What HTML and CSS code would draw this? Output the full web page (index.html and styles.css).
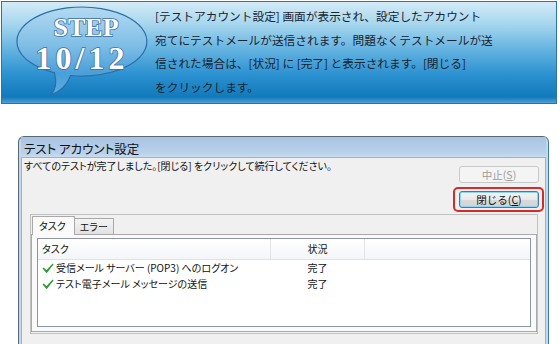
FILE: index.html
```html
<!DOCTYPE html>
<html lang="ja">
  <head>
    <meta charset="UTF-8" />
    <title>STEP 10/12 テスト アカウント設定</title>
    <link rel="stylesheet" href="styles.css">
  </head>
  <body>
    <div class="banner">
      <svg class="bubble" width="150" height="101" viewBox="0 0 150 101">
        <defs>
          <linearGradient id="bubble-fill" x1="0" y1="0" x2="0" y2="1">
            <stop offset="0" stop-color="#b4daf1" />
            <stop offset="0.45" stop-color="#7dbde6" />
            <stop offset="0.75" stop-color="#4a9fd9" />
            <stop offset="1" stop-color="#5aaee0" />
          </linearGradient>
        </defs>
        <path d="M68.7 73.5 A65 34.5 0 1 0 52.5 70.8 Q56 85 49 93 Q63 88 68.7 73.5 Z"
              fill="url(#bubble-fill)" stroke="#2c6ea8" stroke-width="1.2" />
        <text class="step-label" x="84" y="34" text-anchor="middle">STEP</text>
        <text class="step-count" x="80" y="67" text-anchor="middle">10/12</text>
      </svg>
      <p class="step-text">
        [テストアカウント設定] 画面が表示され、設定したアカウント<br />
        宛てにテストメールが送信されます。問題なくテストメールが送<br />
        信された場合は、[状況] に [完了] と表示されます。[閉じる]<br />
        をクリックします。
      </p>
    </div>

    <div class="dialog">
      <div class="titlebar">テスト アカウント設定</div>
      <div class="client">
        <div class="top-row">
          <p class="msg">すべてのテストが完了しました。[閉じる] をクリックして続行してください。</p>
          <div class="btns">
            <button class="btn btn-stop" disabled>中止(<u>S</u>)</button>
            <span class="highlight">
              <button class="btn btn-close">閉じる(<u>C</u>)</button>
            </span>
          </div>
        </div>

        <div class="tab-frame">
          <div class="tab-strip">
            <span class="tab active">タスク</span>
            <span class="tab">エラー</span>
          </div>
          <div class="tab-panel">
            <div class="list">
              <div class="list-row list-head">
                <span class="col-task">タスク</span>
                <span class="col-status">状況</span>
                <span class="col-rest"></span>
              </div>
              <div class="list-row">
                <span class="col-task">
                  <svg class="check" width="12" height="11" viewBox="0 0 12 11">
                    <path d="M0.5 5.6 L1.9 4.5 L4.4 7.3 L10.6 0.4 L11.6 1.2 L4.7 10.2 Z" fill="#2e9a35" />
                  </svg>
                  受信メール サーバー (POP3) へのログオン
                </span>
                <span class="col-status">完了</span>
              </div>
              <div class="list-row">
                <span class="col-task">
                  <svg class="check" width="12" height="11" viewBox="0 0 12 11">
                    <path d="M0.5 5.6 L1.9 4.5 L4.4 7.3 L10.6 0.4 L11.6 1.2 L4.7 10.2 Z" fill="#2e9a35" />
                  </svg>
                  テスト電子メール メッセージの送信
                </span>
                <span class="col-status">完了</span>
              </div>
            </div>
          </div>
        </div>
      </div>
    </div>
  </body>
</html>
```

FILE: styles.css
```css
/* Page */
body {
  margin: 0;
  width: 560px;
  height: 344px;
  overflow: hidden;
  background: #ffffff;
  font-family: "Noto Sans CJK JP", "Noto Sans", sans-serif;
  font-feature-settings: "palt";
}

/* Step banner */
.banner {
  display: flex;
  height: 101px;
  margin: 1px 3px 0 1px;
  border: 1px solid #2f72a6;
  background: linear-gradient(
    to bottom,
    #d3ebf6 0%,
    #a6d6ee 22%,
    #62b2e0 48%,
    #2b91d0 72%,
    #1279bb 94%,
    #4f9fd2 100%
  );
}

.bubble {
  flex: none;
}

.step-label,
.step-count {
  font-family: "Liberation Serif", serif;
  font-weight: bold;
  fill: #ffffff;
  stroke: #3a6d9e;
  stroke-width: 1.5px;
  paint-order: stroke;
}

.step-label {
  font-size: 26px;
}

.step-count {
  font-size: 32px;
  letter-spacing: 4px;
}

.step-text {
  margin: 2px 0 0 3px;
  font-size: 11.7px;
  font-feature-settings: normal;
  line-height: 23.5px;
  color: #1a2330;
}

/* Dialog window */
.dialog {
  box-sizing: border-box;
  width: 531px;
  height: 212px;
  margin: 32px 0 0 18px;
  padding: 0 2px 2px;
  border: 1px solid #5c6670;
  border-bottom-color: #2b8197;
  border-right-color: #3c7f96;
  border-radius: 6px 6px 0 0;
  background: #c3d8ee;
}

.titlebar {
  height: 20px;
  padding-left: 3px;
  font-size: 12.5px;
  line-height: 24px;
  color: #111;
  background: linear-gradient(to bottom, #a8c4e3, #b9d1eb 80%, #c8dcf0);
}

.client {
  height: 190px;
  padding: 0 1px 0 2px;
  border: 1px solid #9db3cc;
  background: #f0f0f0;
}

.top-row {
  display: flex;
  justify-content: space-between;
}

.msg {
  margin: 0;
  font-size: 10px;
  line-height: 16px;
  color: #111;
}

.btns {
  display: flex;
  flex-direction: column;
  align-items: flex-end;
  gap: 4px;
  margin-top: 8px;
}

.btn {
  box-sizing: border-box;
  width: 80px;
  height: 17px;
  padding: 0;
  font-family: inherit;
  font-size: 10.5px;
  line-height: 14px;
  border-radius: 3px;
}

.btn-stop {
  margin-right: 5px;
  color: #9c9c9c;
  border: 1px solid #c9c9c9;
  background: #f4f4f4;
}

.btn-close {
  display: block;
  color: #111;
  border: 1px solid #3a7db3;
  box-shadow: inset 0 0 0 1px #8fd3f4;
  background: linear-gradient(to bottom, #f4f4f4 0%, #e9e9e9 50%, #dadada 51%, #d3d3d3 100%);
}

.highlight {
  display: block;
  padding: 2px 3px 2px 4px;
  border: 2px solid #d42b2b;
  border-radius: 5px;
}

/* Tabs */
.tab-frame {
  box-sizing: border-box;
  height: 120px;
  margin: 2px 6px 0 6px;
  padding: 2px 0 0 0;
  border: 1px solid #c2c2c2;
}

.tab-strip {
  display: flex;
  align-items: flex-end;
  height: 17px;
  padding-left: 1px;
}

.tab {
  box-sizing: border-box;
  height: 16px;
  padding: 0 5px;
  font-size: 10px;
  line-height: 15px;
  white-space: nowrap;
  color: #111;
  border: 1px solid #a9a9a9;
  border-bottom: none;
  background: linear-gradient(to bottom, #f4f4f4, #e2e2e2);
}

.tab.active {
  position: relative;
  z-index: 1;
  height: 19px;
  margin-bottom: -1px;
  padding: 1px 8px 0 6px;
  background: #fafafa;
}

.tab + .tab {
  border-left: none;
}

.tab-panel {
  box-sizing: border-box;
  height: 98px;
  padding: 3px 5px 0 5px;
  border: 1px solid #a9a9a9;
  background: #fafafa;
}

/* List view */
.list {
  box-sizing: border-box;
  height: 89px;
  border: 1px solid #8f959c;
  background: #ffffff;
}

.list-row {
  display: flex;
  height: 16px;
  font-size: 10px;
  line-height: 16px;
  color: #111;
}

.list-head {
  box-sizing: border-box;
  height: 21px;
  line-height: 20px;
  border-bottom: 1px solid #e2e2e2;
  background: linear-gradient(to bottom, #ffffff, #f3f5f7);
}

.col-task {
  display: flex;
  align-items: center;
  gap: 2px;
  width: 233px;
  padding-left: 4px;
  box-sizing: border-box;
}

.col-status {
  width: 93px;
  text-align: center;
}

.list-head .col-task,
.list-head .col-status {
  border-right: 1px solid #e3e3e3;
}

.col-rest {
  flex: 1;
}

.check {
  flex: none;
}
```
